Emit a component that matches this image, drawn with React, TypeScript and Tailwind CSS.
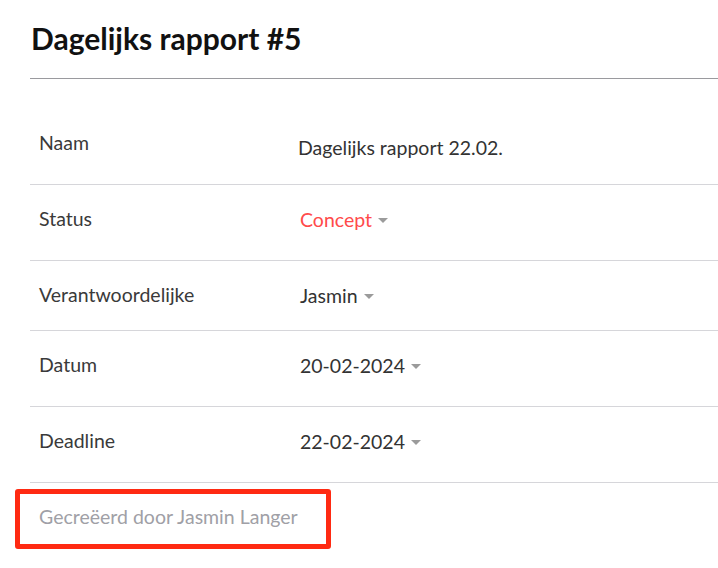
import React from "react";

function Caret() {
  return (
    <svg width="10" height="5" viewBox="0 0 10 5" className="ml-[6px] mt-[1px] shrink-0">
      <path d="M0 0 L10 0 L5 5 Z" fill="#9b9b9b" />
    </svg>
  );
}

function Row({
  label,
  children,
  h = "h-[76px]",
}: {
  label: string;
  children: React.ReactNode;
  h?: string;
}) {
  return (
    <div className={`flex items-start border-b border-[#d6d6da] ${h}`}>
      <div className="w-[270px] pl-[9px] pt-[22px] text-[19.5px] leading-[24px] text-[#3a3a3a]">
        {label}
      </div>
      <div className="flex items-center pt-[23px] text-[19.5px] leading-[24px] text-[#333]">
        {children}
      </div>
    </div>
  );
}

export default function App() {
  return (
    <div
      className="min-h-[568px] w-[718px] bg-white pl-[30px]"
      style={{ fontFamily: "Lato, 'Open Sans', sans-serif" }}
    >
      <div className="border-b border-[#9a9a9e] pt-[18px] pb-[20px] pl-[1px]">
        <h1 className="text-[30px] font-bold leading-[40px] text-[#111]">Dagelijks rapport #5</h1>
      </div>
      <div className="mt-[30px]">
        <Row label="Naam">
          <span className="ml-[-2px] mt-[4px]">Dagelijks rapport 22.02.</span>
        </Row>
        <Row label="Status">
          <span className="text-[#ff4a4a]">Concept</span>
          <Caret />
        </Row>
        <Row label="Verantwoordelijke" h="h-[70px]">
          <span>Jasmin</span>
          <Caret />
        </Row>
        <Row label="Datum">
          <span>20-02-2024</span>
          <Caret />
        </Row>
        <Row label="Deadline">
          <span>22-02-2024</span>
          <Caret />
        </Row>
      </div>
      <div className="ml-[-15px] mt-[6px] h-[60px] w-[316px] rounded-[3px] border-[5px] border-[#ff2a12] pl-[19px] pt-[11px]">
        <span className="text-[19.5px] leading-[24px] text-[#a0a0a6]">Gecreëerd door Jasmin Langer</span>
      </div>
    </div>
  );
}
